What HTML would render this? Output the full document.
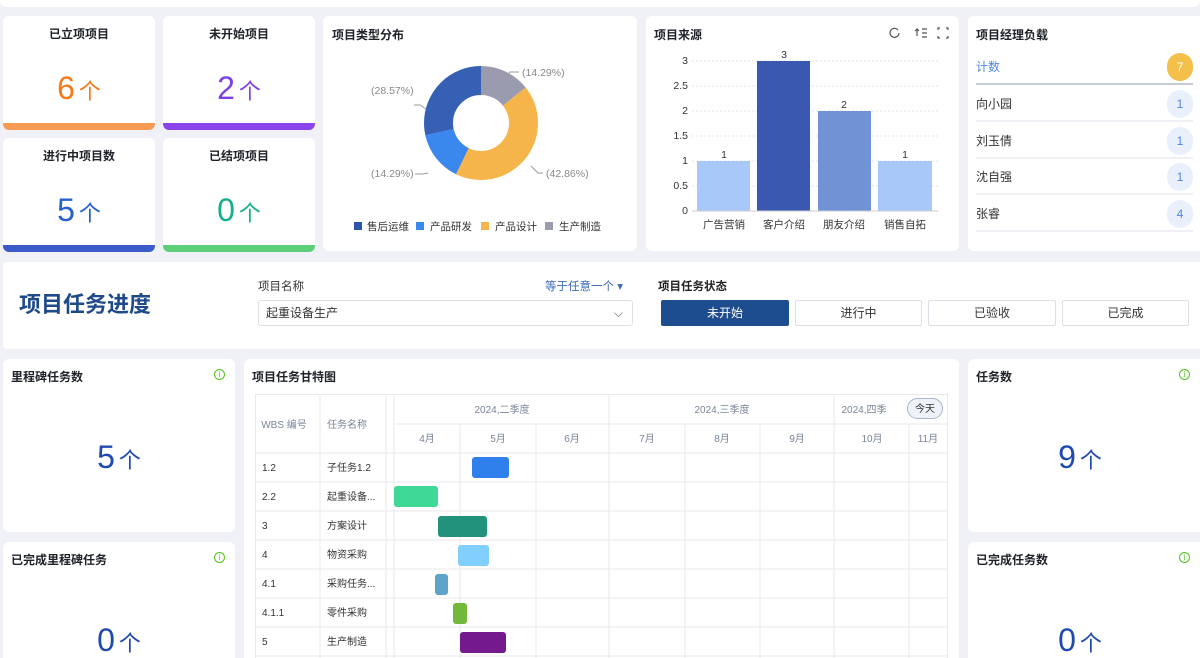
<!DOCTYPE html>
<html><head><meta charset="utf-8"><style>
*{margin:0;padding:0;box-sizing:border-box}
html,body{width:1200px;height:658px;overflow:hidden}
body{background:#f0f1f6;font-family:"Liberation Sans","Noto Sans CJK SC",sans-serif;position:relative;color:#222}
.c{position:absolute;background:#fff;border-radius:6px;overflow:hidden}
.t{position:absolute;font-size:12px;font-weight:bold;color:#1f2329}
.kpi .t{width:100%;text-align:center;top:9px}
.num{position:absolute;width:100%;text-align:center;top:54px;font-size:32px}
.num span{font-size:22px;margin-left:4px}
.bar{position:absolute;left:0;right:0;bottom:0;height:7px}
.abs{position:absolute}
.row{position:absolute;left:8px;right:15px;height:36px;border-bottom:2px solid #eef0f4;font-size:12px;color:#333;line-height:36px}
.badge{position:absolute;right:0;top:4px;width:26px;height:28px;border-radius:13px;background:#e9f0fc;color:#4e86e8;text-align:center;line-height:28px;font-size:12px}
.btn{position:absolute;top:300px;height:26px;border:1px solid #dcdfe6;border-radius:2px;font-size:12px;text-align:center;line-height:24px;color:#333;background:#fff}
.info{position:absolute;width:11px;height:11px;border:1px solid #52c41a;border-radius:50%;color:#52c41a;font-size:8px;text-align:center;line-height:9px}
</style></head><body>
<div class="c" style="left:0;top:-6px;width:1200px;height:13px;border-radius:0 0 6px 6px"></div>

<div class="c kpi" style="left:3px;top:16px;width:152px;height:114px"><div class="t">已立项项目</div><div class="num" style="color:#f57a1a">6<span>个</span></div><div class="bar" style="background:#f79a53"></div></div>
<div class="c kpi" style="left:163px;top:16px;width:152px;height:114px"><div class="t">未开始项目</div><div class="num" style="color:#8040e8">2<span>个</span></div><div class="bar" style="background:#8b44ea"></div></div>
<div class="c kpi" style="left:3px;top:138px;width:152px;height:114px"><div class="t">进行中项目数</div><div class="num" style="color:#2560d0">5<span>个</span></div><div class="bar" style="background:#3b5bc8"></div></div>
<div class="c kpi" style="left:163px;top:138px;width:152px;height:114px"><div class="t">已结项项目</div><div class="num" style="color:#14b08c">0<span>个</span></div><div class="bar" style="background:#5ccf78"></div></div>

<div class="c" style="left:323px;top:16px;width:314px;height:235px">
<div class="t" style="left:9px;top:10px">项目类型分布</div>
<svg class="abs" style="left:0;top:0" width="314" height="235">
<g transform="translate(158,107) rotate(-90)" fill="none" stroke-width="29">
<circle r="42.5" stroke="#9b9bb0" stroke-dasharray="38.16 228.88"/>
<circle r="42.5" stroke="#f5b54a" stroke-dasharray="114.45 152.59" stroke-dashoffset="-38.16"/>
<circle r="42.5" stroke="#3a87ee" stroke-dasharray="38.16 228.88" stroke-dashoffset="-152.61"/>
<circle r="42.5" stroke="#3560b4" stroke-dasharray="76.29 190.75" stroke-dashoffset="-190.77"/>
</g>
<g stroke="#999" fill="none" stroke-width="1"><path d="M183 61 L187 56 L196 56"/><path d="M103 93 L97 89 L91 89"/><path d="M105 157 L100 158 L92 158"/><path d="M208 150 L215 157 L220 157"/></g>
<g font-size="10.5" fill="#888"><text x="199" y="60">(14.29%)</text><text x="48" y="78">(28.57%)</text><text x="48" y="161">(14.29%)</text><text x="223" y="161">(42.86%)</text></g>
<g font-size="10.5" fill="#333"><rect x="31" y="206" width="8" height="8" fill="#2c55ab"/><text x="44" y="214">售后运维</text>
<rect x="93" y="206" width="8" height="8" fill="#3a87ee"/><text x="107" y="214">产品研发</text>
<rect x="158" y="206" width="8" height="8" fill="#f5b54a"/><text x="172" y="214">产品设计</text>
<rect x="222" y="206" width="8" height="8" fill="#9b9bb0"/><text x="236" y="214">生产制造</text></g>
</svg></div>

<div class="c" style="left:646px;top:16px;width:313px;height:235px">
<div class="t" style="left:8px;top:10px">项目来源</div>
<svg class="abs" style="left:0;top:0" width="313" height="235">
<g fill="none" stroke="#555" stroke-width="1.2"><path d="M253 17 a4.5 4.5 0 1 1 -1 -3"/><path d="M271 20 v-7 m-2 2 l2-2 l2 2 M276 13h5 M276 17h5 M276 21h5"/><path d="M292 14v-2h2 M300 12h2v2 M302 20v2h-2 M294 22h-2v-2"/></g>
<g stroke="#e4e6ea" stroke-dasharray="2 2"><path d="M46 45H292 M46 70H292 M46 95H292 M46 120H292 M46 145H292 M46 170H292"/></g>
<g font-size="10.5" fill="#333" text-anchor="end"><text x="42" y="48">3</text><text x="42" y="73">2.5</text><text x="42" y="98">2</text><text x="42" y="123">1.5</text><text x="42" y="148">1</text><text x="42" y="173">0.5</text><text x="42" y="198">0</text></g>
<rect x="51" y="145" width="53" height="50" fill="#a8c8fa"/><rect x="111" y="45" width="53" height="150" fill="#3a58b0"/><rect x="172" y="95" width="53" height="100" fill="#7292d6"/><rect x="232" y="145" width="54" height="50" fill="#a8c8fa"/>
<path d="M46 195H292" stroke="#ccc"/>
<g font-size="10.5" fill="#333" text-anchor="middle"><text x="78" y="142">1</text><text x="138" y="42">3</text><text x="198" y="92">2</text><text x="259" y="142">1</text>
<text x="78" y="212">广告营销</text><text x="138" y="212">客户介绍</text><text x="198" y="212">朋友介绍</text><text x="259" y="212">销售自拓</text></g>
</svg></div>

<div class="c" style="left:968px;top:16px;width:240px;height:235px">
<div class="t" style="left:8px;top:10px">项目经理负载</div>
<div class="row" style="top:33px;border-bottom:2px solid #c8ccd4;color:#4e86e8">计数<div class="badge" style="background:#f5c04a;color:#fff">7</div></div>
<div class="row" style="top:70px">向小园<div class="badge">1</div></div>
<div class="row" style="top:107px">刘玉倩<div class="badge">1</div></div>
<div class="row" style="top:143px">沈自强<div class="badge">1</div></div>
<div class="row" style="top:180px">张睿<div class="badge">4</div></div>
</div>

<div class="c" style="left:3px;top:262px;width:1205px;height:87px;border-radius:4px"></div>
<div class="abs" style="left:19px;top:287px;font-size:22px;font-weight:bold;color:#1f4a8a">项目任务进度</div>
<div class="abs" style="left:258px;top:278px;font-size:11.5px;color:#333">项目名称</div>
<div class="abs" style="left:545px;top:278px;font-size:11.5px;color:#3a6ab8">等于任意一个 ▾</div>
<div class="abs" style="left:258px;top:300px;width:375px;height:26px;border:1px solid #dcdfe6;border-radius:3px;font-size:12px;line-height:24px;padding-left:7px;color:#333">起重设备生产<span style="position:absolute;right:9px;color:#666">⌵</span></div>
<div class="abs" style="left:658px;top:278px;font-size:11.5px;font-weight:bold">项目任务状态</div>
<div class="btn" style="left:661px;width:128px;background:#1e4d8f;color:#fff;border-color:#1e4d8f">未开始</div>
<div class="btn" style="left:795px;width:127px">进行中</div>
<div class="btn" style="left:928px;width:128px">已验收</div>
<div class="btn" style="left:1062px;width:127px">已完成</div>

<div class="c" style="left:3px;top:359px;width:232px;height:173px"><div class="t" style="left:8px;top:9px">里程碑任务数</div><div class="info" style="left:211px;top:10px">i</div><div class="num" style="top:80px;color:#1f4ab0">5<span>个</span></div></div>
<div class="c" style="left:3px;top:542px;width:232px;height:130px"><div class="t" style="left:8px;top:9px">已完成里程碑任务</div><div class="info" style="left:211px;top:10px">i</div><div class="num" style="top:80px;color:#1f4ab0">0<span>个</span></div></div>
<div class="c" style="left:968px;top:359px;width:240px;height:173px"><div class="t" style="left:8px;top:9px">任务数</div><div class="info" style="left:211px;top:10px">i</div><div class="num" style="top:80px;left:-8px;color:#1f4ab0">9<span>个</span></div></div>
<div class="c" style="left:968px;top:542px;width:240px;height:130px"><div class="t" style="left:8px;top:9px">已完成任务数</div><div class="info" style="left:211px;top:10px">i</div><div class="num" style="top:80px;left:-8px;color:#1f4ab0">0<span>个</span></div></div>

<div class="c" style="left:244px;top:359px;width:715px;height:310px">
<div class="t" style="left:8px;top:9px">项目任务甘特图</div>
<svg class="abs" style="left:0;top:0" width="715" height="310">
<g stroke="#e8eaee" fill="none">
<rect x="11.5" y="35.5" width="692" height="280"/>
<path d="M11 94H704 M11 123H704 M11 152H704 M11 181H704 M11 210H704 M11 239H704 M11 268H704 M11 297H704"/>
<path d="M76 35V310 M142 35V310 M150 35V310 M216 65V310 M292 65V310 M365 35V310 M441 65V310 M516 65V310 M590 35V310 M665 65V310 M150 65H704"/>
</g>
<g font-size="10" fill="#7a8598" text-anchor="middle"><text x="258" y="54">2024,二季度</text><text x="478" y="54">2024,三季度</text><text x="620" y="54">2024,四季</text>
<text x="183" y="83">4月</text><text x="254" y="83">5月</text><text x="328" y="83">6月</text><text x="403" y="83">7月</text><text x="478" y="83">8月</text><text x="553" y="83">9月</text><text x="628" y="83">10月</text><text x="684" y="83">11月</text>
<text x="40" y="69">WBS 编号</text><text x="103" y="69">任务名称</text></g>
<rect x="663.5" y="39.5" width="35" height="20" rx="10" fill="#eef2f9" stroke="#aab4c8"/><text x="681" y="53" font-size="10" fill="#333" text-anchor="middle">今天</text>
<g font-size="10" fill="#333"><text x="18" y="112">1.2</text><text x="83" y="112">子任务1.2</text><text x="18" y="141">2.2</text><text x="83" y="141">起重设备...</text><text x="18" y="170">3</text><text x="83" y="170">方案设计</text><text x="18" y="199">4</text><text x="83" y="199">物资采购</text><text x="18" y="228">4.1</text><text x="83" y="228">采购任务...</text><text x="18" y="257">4.1.1</text><text x="83" y="257">零件采购</text><text x="18" y="286">5</text><text x="83" y="286">生产制造</text></g>
<rect x="228" y="98" width="37" height="21" rx="3" fill="#2f80ed"/>
<rect x="150" y="127" width="44" height="21" rx="3" fill="#3fd897"/>
<rect x="194" y="157" width="49" height="21" rx="3" fill="#22927c"/>
<rect x="214" y="186" width="31" height="21" rx="3" fill="#80cfff"/>
<rect x="191" y="215" width="13" height="21" rx="3" fill="#5ca5c8"/>
<rect x="209" y="244" width="14" height="21" rx="3" fill="#72b83a"/>
<rect x="216" y="273" width="46" height="21" rx="3" fill="#741a8c"/>
</svg></div>
</body></html>
